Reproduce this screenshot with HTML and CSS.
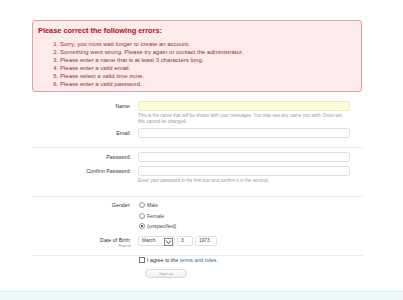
FILE: index.html
```html
<!DOCTYPE html>
<html lang="en">
<head>
    <meta charset="UTF-8">
    <title>Register</title>
    <link rel="stylesheet" href="styles.css">
</head>
<body>
    <div class="page">
        <!-- Fehlerliste -->
        <div class="errors">
            <h3>Please correct the following errors:</h3>
            <ol>
                <li>Sorry, you must wait longer to create an account.</li>
                <li>Something went wrong. Please try again or contact the administrator.</li>
                <li>Please enter a name that is at least 3 characters long.</li>
                <li>Please enter a valid email.</li>
                <li>Please select a valid time zone.</li>
                <li>Please enter a valid password.</li>
            </ol>
        </div>

        <form class="xform">
            <div class="group first">
                <div class="unit">
                    <label class="label">Name:</label>
                    <div class="ctrl">
                        <input type="text" class="text name-input">
                        <p class="explain">This is the name that will be shown with your messages. You may use any name you wish. Once set, this cannot be changed.</p>
                    </div>
                </div>
                <div class="unit">
                    <label class="label">Email:</label>
                    <div class="ctrl"><input type="text" class="text"></div>
                </div>
            </div>

            <div class="group pw">
                <div class="unit">
                    <label class="label">Password:</label>
                    <div class="ctrl"><input type="password" class="text"></div>
                </div>
                <div class="unit">
                    <label class="label">Confirm Password:</label>
                    <div class="ctrl">
                        <input type="password" class="text">
                        <p class="explain">Enter your password in the first box and confirm it in the second.</p>
                    </div>
                </div>
            </div>

            <div class="group personal">
                <div class="unit">
                    <label class="label">Gender:</label>
                    <div class="ctrl radios">
                        <label class="choice"><span class="radio"></span>Male</label>
                        <label class="choice"><span class="radio"></span>Female</label>
                        <label class="choice"><span class="radio checked"></span>(unspecified)</label>
                    </div>
                </div>
                <div class="unit dob">
                    <label class="label">Date of Birth:<span class="hint">Required</span></label>
                    <div class="ctrl dob-fields">
                        <div class="select">March<span class="arrow">
                            <svg width="7" height="6" viewBox="0 0 7 6"><path d="M1 1.5 L3.5 4.5 L6 1.5" fill="none" stroke="#555" stroke-width="1"/></svg>
                        </span></div>
                        <div class="box day">3</div>
                        <div class="box year">1973</div>
                    </div>
                </div>
            </div>

            <div class="group last">
                <div class="unit">
                    <span></span>
                    <div class="ctrl">
                        <label class="agree"><span class="check"></span>I agree to the <a href="#">terms and rules</a>.</label>
                        <button type="button" class="button">Sign up</button>
                    </div>
                </div>
            </div>
        </form>
    </div>

    <footer class="footer"></footer>
</body>
</html>
```

FILE: styles.css
```css
body {
    margin: 0;
    padding: 0;
    background: #fff;
    font-family: "Liberation Sans", Arial, sans-serif;
    color: #444;
    height: 300px;
    overflow: hidden;
}

.page {
    padding: 20px 39px 0 32px;
    height: 271px;
}

/* Fehlerbox */
.errors {
    background: #fdeaea;
    border: 1px solid #d9a3a6;
    border-radius: 3px;
    padding: 5px 5px 3px 5px;
    margin-right: 2px;
    color: #9b2222;
}

.errors h3 {
    margin: 0 0 5px 0;
    font-size: 7.4px;
    line-height: 9px;
    font-weight: bold;
    color: #a11;
}

.errors ol {
    margin: 0;
    padding-left: 22px;
    font-size: 6px;
    line-height: 8px;
    color: #9a3030;
}

/* Formular */
.xform {
    margin-top: 9px;
}

.group {
    border-top: 1px solid #ececec;
    padding: 4px 0 9px 0;
}

.group.first {
    border-top: none;
    padding-top: 0;
}

.group.pw {
    padding-bottom: 13px;
}

.group.personal {
    padding: 3px 0 8px 0;
}

.unit {
    display: grid;
    grid-template-columns: 99px 212px;
    column-gap: 7px;
    margin-bottom: 4px;
}

.unit:last-child {
    margin-bottom: 0;
}

.label {
    text-align: right;
    font-size: 5.3px;
    line-height: 10px;
    color: #333;
}

.text {
    display: block;
    box-sizing: border-box;
    width: 212px;
    height: 10px;
    margin: 0;
    border: 1px solid #dedede;
    border-radius: 2px;
    background: #fff;
    padding: 0;
}

.name-input {
    background: #fefdd8;
    border-color: #e6e6c8;
}

.explain {
    margin: 2px 0 -1px 0;
    font-size: 4.6px;
    line-height: 6px;
    color: #999;
}

/* Radios */
.radios {
    display: flex;
    flex-direction: column;
}

.choice {
    display: flex;
    align-items: center;
    height: 10.5px;
    font-size: 5.1px;
    color: #444;
}

.radio {
    width: 4px;
    height: 4px;
    border: 0.7px solid #999;
    border-radius: 50%;
    margin: 0 2px 0 1px;
    background: #fff;
    display: inline-block;
    position: relative;
}

.radio.checked::after {
    content: "";
    position: absolute;
    left: 1px;
    top: 1px;
    width: 2px;
    height: 2px;
    border-radius: 50%;
    background: #333;
}

/* Geburtsdatum */
.dob {
    margin-top: 3.5px;
}

.dob .label {
    display: flex;
    flex-direction: column;
    align-items: flex-end;
    line-height: 9px;
}

.dob .hint {
    font-size: 3px;
    line-height: 2px;
    color: #999;
}

.dob-fields {
    display: flex;
    gap: 2px;
    align-items: flex-start;
}

.select,
.box {
    box-sizing: border-box;
    height: 10px;
    border: 1px solid #dedede;
    border-radius: 2px;
    font-size: 4.8px;
    line-height: 8px;
    padding-left: 3px;
    color: #444;
}

.select {
    width: 37px;
    display: flex;
    justify-content: space-between;
    padding-right: 1px;
}

.arrow {
    width: 7px;
    height: 6px;
    margin-top: 1px;
    border: 0.7px solid #888;
    display: flex;
}

.box.day {
    width: 16px;
}

.box.year {
    width: 22px;
}

/* Zustimmung */
.group.last {
    padding-top: 1px;
}

.agree {
    display: flex;
    align-items: center;
    font-size: 5.3px;
    line-height: 7px;
    color: #333;
}

.agree a {
    color: #2b6a9c;
    text-decoration: none;
    margin-left: 1.5px;
}

.check {
    width: 4px;
    height: 4px;
    border: 0.7px solid #777;
    margin: 0 2px 0 1px;
    background: #fff;
}

.button {
    display: block;
    margin: 5px 0 0 7px;
    width: 42px;
    height: 9px;
    padding: 0;
    border: 1px solid #d6d6d6;
    border-radius: 5px;
    background: linear-gradient(#fdfdfd, #f0f0f0);
    font-family: "Liberation Sans", Arial, sans-serif;
    font-size: 4.2px;
    color: #aaa;
}

/* Fuss */
.footer {
    border-top: 1px solid #d7e7f0;
    background: #eef6fb;
    height: 10px;
}
```
